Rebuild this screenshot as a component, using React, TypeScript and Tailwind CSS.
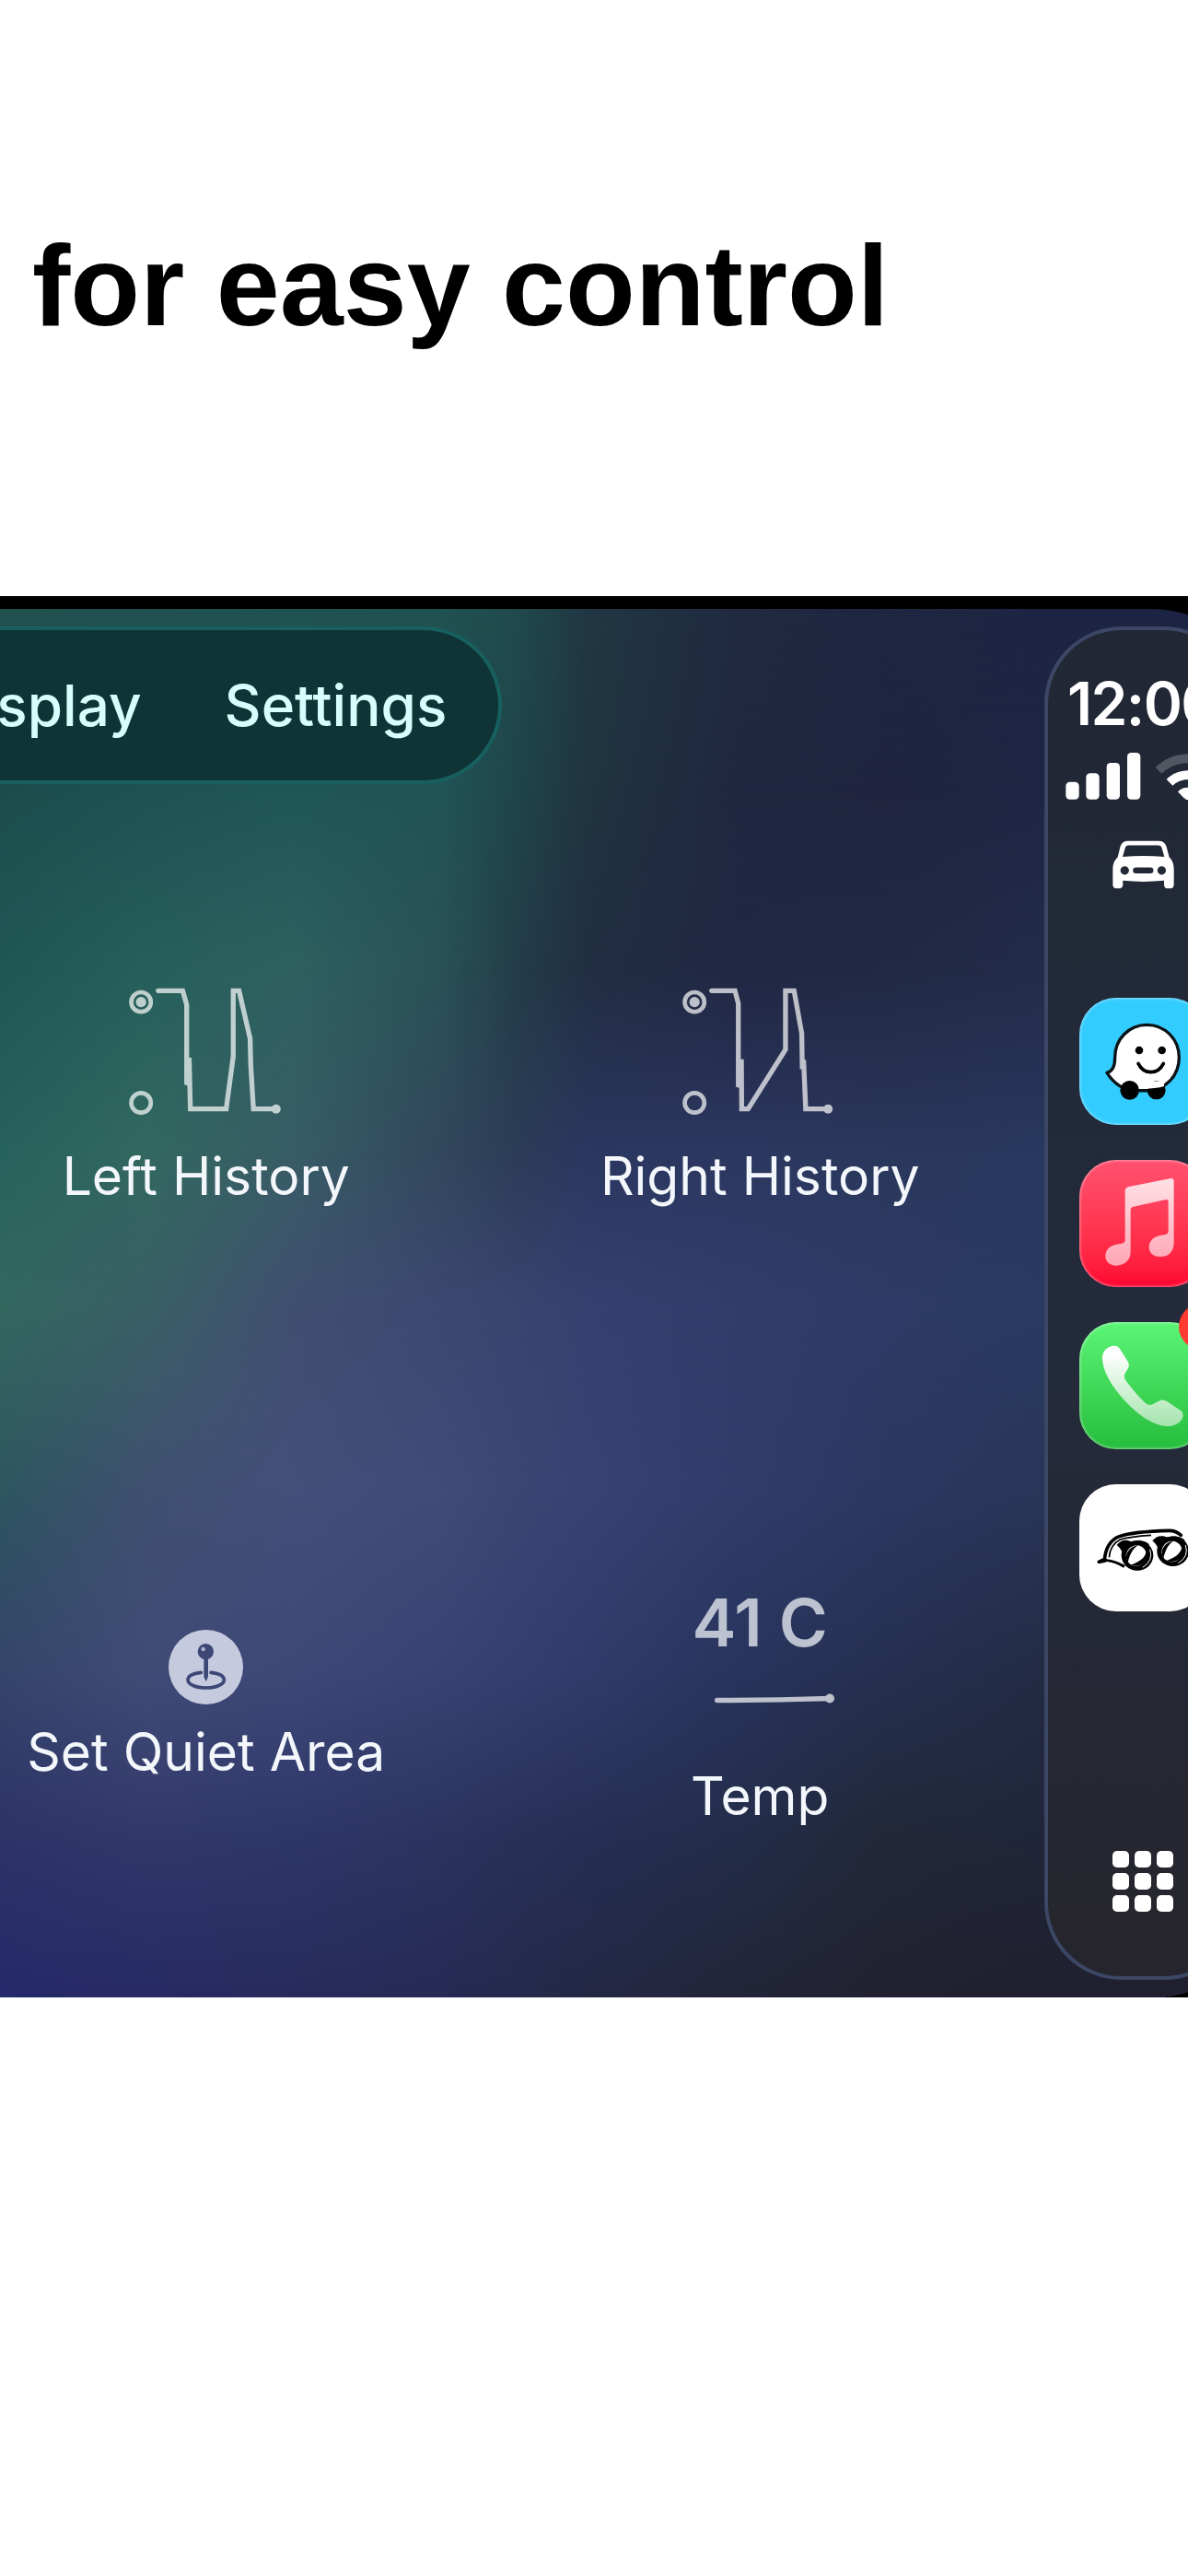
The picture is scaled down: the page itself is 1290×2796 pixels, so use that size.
import type { CSSProperties, ReactNode } from 'react';

/* Wallpaper: rows of horizontal colour stops, cross-faded downwards. */
const COLUMNS = [0, 160, 320, 480, 560, 640, 800, 960, 1134, 1380];
const ROWS: { y: number; colors: string[] }[] = [
  { y: 0, colors: ['#225250', '#215251', '#205352', '#205251', '#204a4d', '#213743', '#202a40', '#1f2642', '#1d2543', '#1d2543'] },
  { y: 190, colors: ['#1c4d4d', '#1e5253', '#1f5657', '#205456', '#20454c', '#203440', '#202740', '#20243f', '#1e2644', '#1e2644'] },
  { y: 390, colors: ['#1f5755', '#265f5b', '#2e6160', '#2a5157', '#233d49', '#212e42', '#212743', '#212944', '#232c4a', '#232c4a'] },
  { y: 590, colors: ['#27625c', '#32685f', '#385c66', '#32475c', '#2c3c57', '#2b3760', '#2c3860', '#2b385c', '#29385f', '#29385f'] },
  { y: 760, colors: ['#33685f', '#3a5f66', '#404f70', '#3c4871', '#39456f', '#354170', '#313d6b', '#2e3b66', '#2a3a62', '#2a3a62'] },
  { y: 960, colors: ['#2e5560', '#3f5070', '#444f7a', '#404b78', '#3b4674', '#374373', '#303d6b', '#2b3861', '#293658', '#293658'] },
  { y: 1160, colors: ['#35446a', '#404b76', '#3d4877', '#374373', '#343f70', '#303b6a', '#28345c', '#253050', '#232b44', '#232b44'] },
  { y: 1330, colors: ['#2d3468', '#31396b', '#2e376a', '#2b345f', '#283158', '#252f54', '#232d4a', '#222839', '#20263a', '#20263a'] },
  { y: 1508, colors: ['#26296a', '#272a64', '#272b5c', '#262a54', '#25294c', '#242845', '#222538', '#222230', '#201f2e', '#201f2e'] },
];

function Wallpaper() {
  return (
    <div aria-hidden="true" className="absolute inset-0">
      {ROWS.map((row, i) => {
        const stops = row.colors.map((c, k) => `${c} ${COLUMNS[k]}px`).join(', ');
        const style: CSSProperties = { backgroundImage: `linear-gradient(90deg, ${stops})` };
        if (i > 0) {
          style.maskImage = `linear-gradient(180deg, transparent ${ROWS[i - 1].y}px, black ${row.y}px)`;
        }
        return <div key={row.y} className="absolute inset-0" style={style} />;
      })}
    </div>
  );
}

function HistoryIcon({ path, dot }: { path: ReactNode; dot: number }) {
  return (
    <svg viewBox="416 90 510 430" className="h-[143px] w-[170px]" fill="none" stroke="#fff" strokeWidth="16" opacity="0.7" aria-hidden="true">
      <circle cx="458" cy="143" r="32" strokeWidth="14" />
      <circle cx="458" cy="143" r="17" fill="#fff" stroke="none" />
      <circle cx="458" cy="472" r="32" strokeWidth="14" />
      {path}
      <circle cx={dot} cy="492" r="15" fill="#fff" stroke="none" />
    </svg>
  );
}

function LeftHistoryIcon() {
  return (
    <HistoryIcon
      dot={899}
      path={<path d="M514 106H594L607 152V406L612 408L615 325L619 492H736L759 320V106H778L814 262L816 345L825 492H899" strokeLinecap="round" />}
    />
  );
}

function RightHistoryIcon() {
  return (
    <HistoryIcon
      dot={894}
      path={<path d="M514 106H590L601 148V414L608 416L611 330L612 492H633L755 298V106H783L808 245L810 362L814 332L821 492H894" strokeLinecap="round" />}
    />
  );
}

function JoystickIcon() {
  return (
    <svg viewBox="549 153 243 243" className="size-[81px]" aria-hidden="true">
      <circle cx="670.500" cy="274.500" r="121.500" fill="#c6cade" />
      <path d="M655 292C628 295 612 304 612 316C612 331 638 342 671 342C704 342 730 331 730 316C730 304 714 295 687 292" fill="none" stroke="#3d4876" strokeWidth="11" strokeLinecap="round" />
      <path d="M664 240H678V306L671 322L664 306Z" fill="#3d4876" />
      <circle cx="670" cy="224" r="26" fill="#3d4876" />
      <circle cx="662" cy="216" r="7" fill="#aab0cc" />
    </svg>
  );
}

function TempTrend() {
  return (
    <svg viewBox="220 412 402 44" className="h-[15px] w-[134px]" fill="none" stroke="#fff" strokeWidth="16" opacity="0.7" aria-hidden="true">
      <path d="M234 440H278L440 438L602 434" strokeLinecap="round" />
      <circle cx="601" cy="434" r="15" fill="#fff" stroke="none" />
    </svg>
  );
}

function SignalIcon() {
  return (
    <svg viewBox="142 530 246 153" className="h-[51px] w-[82px]" fill="#fff" aria-hidden="true">
      <rect x="143" y="625" width="43" height="57" rx="13" />
      <rect x="209" y="597" width="43" height="85" rx="13" />
      <rect x="276" y="563" width="43" height="119" rx="13" />
      <rect x="343" y="530" width="43" height="152" rx="13" />
    </svg>
  );
}

function WifiIcon() {
  return (
    <svg viewBox="430 530 216 153" className="h-[51px] w-[72px]" fill="none" stroke="#fff" strokeWidth="29" aria-hidden="true">
      <path d="M442 588A138 138 0 0 1 634 588" opacity="0.22" />
      <path d="M478 627A86 86 0 0 1 598 627" />
      <path d="M515 665A35 35 0 0 1 561 665L538 690Z" fill="#fff" stroke="none" />
      <path d="M515 667A33 33 0 0 1 561 667" />
    </svg>
  );
}

function CarIcon() {
  return (
    <svg viewBox="294 815 202 158" className="h-[53px] w-[67px]" aria-hidden="true">
      <path
        fill="#fff"
        fillRule="evenodd"
        d="M345 816H445C458 816 466 822 470 833L480 870C490 880 495 892 495 910V960C495 967 490 972 483 972H475C467 972 463 967 463 960V946Q395 953 328 946V960C328 967 323 972 315 972H308C300 972 295 967 295 960V910C295 892 300 880 311 870L320 833C324 822 332 816 345 816ZM348 831C340 831 337 834 335 841L327 868Q395 863 464 868L456 841C454 834 450 831 443 831ZM334 899A14 14 0 1 0 334 927A14 14 0 1 0 334 899ZM455 899A14 14 0 1 0 455 927A14 14 0 1 0 455 899ZM371 903A10 10 0 0 0 371 923H418A10 10 0 0 0 418 903Z"
      />
    </svg>
  );
}

function WazeIcon() {
  return (
    <svg viewBox="186 68 414 414" className="size-full" aria-hidden="true">
      <path d="M302 262C302 202 348 156 406 156C465 156 511 203 511 262C511 322 466 370 406 370H365C330 367 300 350 276 312Q302 306 302 262Z" fill="#fff" stroke="#0b1317" strokeWidth="10" strokeLinejoin="round" />
      <circle cx="350" cy="369" r="31" />
      <circle cx="437" cy="369" r="30" />
      <path d="M380 340H462V356Q440 364 380 365Z" fill="#fff" />
      <path d="M380 370H408" stroke="#0b1317" strokeWidth="10" />
      <circle cx="381" cy="239" r="13" />
      <circle cx="455" cy="239" r="13" />
      <path d="M378 282C396 319 442 319 460 282" fill="none" stroke="#000" strokeWidth="11" strokeLinecap="round" />
    </svg>
  );
}

function MusicIcon() {
  return (
    <svg viewBox="186 597 414 414" className="size-full" aria-hidden="true">
      <defs>
        <linearGradient id="note" x1="0" y1="0" x2="0" y2="1">
          <stop offset="0" stopColor="#ffe0e6" />
          <stop offset="1" stopColor="#ffa6b4" />
        </linearGradient>
      </defs>
      <path
        fill="url(#note)"
        d="M348 684L484 657Q494 656 494 667V868C494 895 476 912 450 912C428 912 413 899 413 881C413 860 430 846 450 843L466 840Q476 838 476 828V732Q476 725 468 726L362 749Q353 751 353 759V895C353 924 334 941 306 941C285 941 271 928 271 910C271 889 287 875 307 872L324 869Q335 867 335 857V697Q336 686 348 684Z"
      />
    </svg>
  );
}

function PhoneIcon() {
  return (
    <svg viewBox="186 73 414 414" className="size-full" aria-hidden="true">
      <defs>
        <linearGradient id="handset" x1="0" y1="0" x2="0" y2="1">
          <stop offset="0.1" stopColor="#ffffff" />
          <stop offset="1" stopColor="#a4e4ac" />
        </linearGradient>
      </defs>
      <path
        fill="url(#handset)"
        d="M293 151C304 148 312 151 318 160L345 203C350 213 347 221 341 230L335 240C331 248 332 256 338 264C358 291 378 315 402 337C410 344 418 344 427 339L445 330C455 325 463 326 472 332L515 360C524 366 526 375 522 385C514 404 494 413 471 412C430 409 392 385 350 345C302 298 265 244 261 196C260 173 269 157 293 151Z"
      />
    </svg>
  );
}

function Lens({ x, y }: { x: number; y: number }) {
  return (
    <g transform={`translate(${x} ${y})`}>
      <path d="M-64 -34Q-50 -52 -28 -49L-12 -44Q20 -55 42 -36L26 -22Q0 -44 -24 -16L-44 8Q-42 -16 -64 -34Z" />
      <ellipse cx="3" cy="0" rx="52" ry="49" />
      <ellipse cx="0" cy="1" rx="33" ry="34" fill="#fff" transform="rotate(28)" />
      <path d="M32 -26C36 2 14 20 -20 31C10 42 38 22 38 -2Q38 -16 32 -26Z" />
      <path d="M-28 24C-42 -4 -24 -28 6 -34C-10 -24 -22 -6 -28 24Z" />
      <path d="M44 -20Q56 18 20 39" fill="none" stroke="#fff" strokeWidth="3" />
    </g>
  );
}

function GogglesIcon() {
  return (
    <svg viewBox="186 602 414 414" className="size-full" aria-hidden="true">
      <path d="M250 855L268 850Q272 790 316 772Q360 756 480 753Q500 753 517 768" fill="none" stroke="#000" strokeWidth="11" strokeLinecap="round" />
      <path d="M245 858Q246 848 266 842L276 846Q300 848 336 866L330 874Q300 856 276 854Q262 860 245 858Z" />
      <path d="M283 840Q286 800 318 783Q350 772 420 768" fill="none" stroke="#000" strokeWidth="5" />
      <Lens x={372} y={834} />
      <Lens x={488} y={820} />
    </svg>
  );
}

function Tile({ label, children, gap }: { label: string; children: ReactNode; gap: string }) {
  return (
    <button type="button" className={`flex flex-col items-center ${gap}`}>
      {children}
      <span className="text-[57px] leading-[64px] text-[#f3f7fb]">{label}</span>
    </button>
  );
}

function AppButton({ label, tone, children }: { label: string; tone: string; children: ReactNode }) {
  return (
    <button type="button" aria-label={label} className={`relative size-[138px] rounded-[40px] shadow-[inset_0_0_3px_1px_rgba(255,255,255,0.45)] ${tone}`}>
      {children}
    </button>
  );
}

function Dock() {
  return (
    <aside className="relative my-[19px] mr-8 flex w-[214px] shrink-0 flex-col items-center rounded-[84px] border-4 border-[#3c4765] bg-linear-to-b from-[#212733] via-[#232b3c] to-[#26252d] pb-[70px]">
      <time className="mt-[42px] text-[64px] leading-[76px] font-semibold tracking-tight text-white">12:00</time>
      <div className="mt-[15px] flex items-center gap-[15px]">
        <SignalIcon />
        <WifiIcon />
      </div>
      <button type="button" aria-label="Car" className="mt-[44px]">
        <CarIcon />
      </button>
      <div className="mt-[118px] flex flex-col gap-[38px]">
        <AppButton label="Waze" tone="bg-[#33ccff]"><WazeIcon /></AppButton>
        <AppButton label="Music" tone="bg-linear-to-b from-[#ff506f] to-[#ff0030]"><MusicIcon /></AppButton>
        <AppButton label="Phone" tone="bg-linear-to-b from-[#5bf575] to-[#24bd3c]">
          <PhoneIcon />
          <span className="absolute -top-5 -right-5 size-[50px] rounded-full bg-[#ff3b30]" />
        </AppButton>
        <AppButton label="Goggles" tone="bg-white"><GogglesIcon /></AppButton>
      </div>
      <button type="button" aria-label="All apps" className="mt-auto grid grid-cols-3 gap-1.5">
        {Array.from({ length: 9 }, (_, i) => (
          <span key={i} className="size-[18px] rounded-[5px] bg-white" />
        ))}
      </button>
    </aside>
  );
}

export default function App() {
  return (
    <main className="min-h-screen overflow-x-hidden bg-white font-['Inter',sans-serif]">
      <h1 className="px-[35px] pt-[240px] pb-[267px] font-['Liberation_Sans',sans-serif] text-[124px] leading-[140px] font-bold whitespace-nowrap text-black">
        for easy control
      </h1>
      <section className="overflow-hidden bg-black pt-3.5">
        <div className="relative -mr-[90px] flex overflow-hidden rounded-r-[130px]">
          <Wallpaper />
          <div className="relative flex min-w-0 flex-1 flex-col items-start pt-[19px] pb-[186px]">
            <nav className="-ml-32 flex h-[171px] items-center gap-[90px] rounded-r-[86px] border-4 border-[#17605f] bg-[#103335] pr-[56px] pl-[60px] text-[62px] leading-[72px] font-medium text-[#d9fcfc]">
              <button type="button">Display</button>
              <button type="button">Settings</button>
            </nav>
            <div className="mt-[219px] -ml-[77px] grid grid-cols-2 place-items-center gap-y-[412px] self-stretch pr-2">
              <Tile label="Left History" gap="gap-8"><LeftHistoryIcon /></Tile>
              <Tile label="Right History" gap="gap-8"><RightHistoryIcon /></Tile>
              <Tile label="Set Quiet Area" gap="gap-5"><JoystickIcon /></Tile>
              <Tile label="Temp" gap="gap-0">
                <span className="text-[72px] leading-[80px] font-semibold text-[#bcc2d0]">41 C</span>
                <span className="flex h-[117px] items-center pb-8 pl-8">
                  <TempTrend />
                </span>
              </Tile>
            </div>
          </div>
          <Dock />
        </div>
      </section>
    </main>
  );
}
